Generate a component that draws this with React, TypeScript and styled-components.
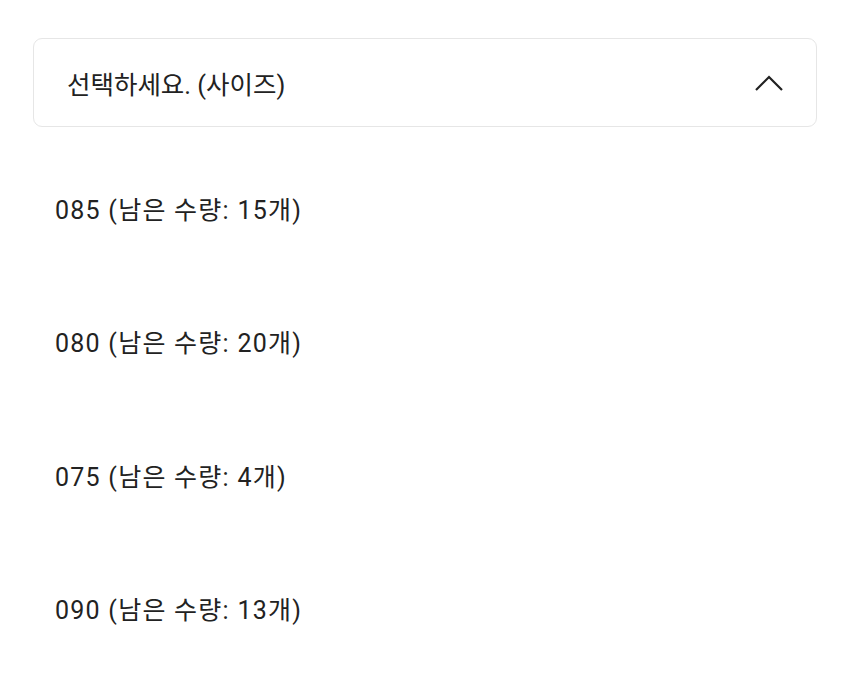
import React from "react";
import styled, { createGlobalStyle } from "styled-components";

const GlobalStyle = createGlobalStyle`
  body {
    margin: 0;
    background: #fff;
    font-family: Roboto, "Noto Sans CJK KR", sans-serif;
    color: #222;
  }
`;

const Wrap = styled.div`
  padding: 38px 33px 0 33px;
`;

const SelectBox = styled.div`
  display: flex;
  align-items: center;
  justify-content: space-between;
  height: 89px;
  box-sizing: border-box;
  border: 1.5px solid #e6e6e6;
  border-radius: 9px;
  padding: 0 32px 0 33px;
  font-size: 25.5px;
`;

const List = styled.ul`
  list-style: none;
  margin: 0;
  padding: 14px 0 0 22px;
`;

const Option = styled.li`
  height: 133.5px;
  display: flex;
  align-items: center;
  font-size: 25px;
  letter-spacing: 1.25px;
`;

const options = [
  { size: "085", count: 15 },
  { size: "080", count: 20 },
  { size: "075", count: 4 },
  { size: "090", count: 13 },
];

const App = () => {
  return (
    <>
      <GlobalStyle />
      <Wrap>
        <SelectBox>
          <span>선택하세요. (사이즈)</span>
          <svg width="30" height="18" viewBox="0 0 30 18" fill="none">
            <path d="M2 16 L15 3 L28 16" stroke="#222" strokeWidth="2.2" />
          </svg>
        </SelectBox>
        <List>
          {options.map((o) => (
            <Option key={o.size}>
              {o.size} (남은 수량: {o.count}개)
            </Option>
          ))}
        </List>
      </Wrap>
    </>
  );
};

export default App;
